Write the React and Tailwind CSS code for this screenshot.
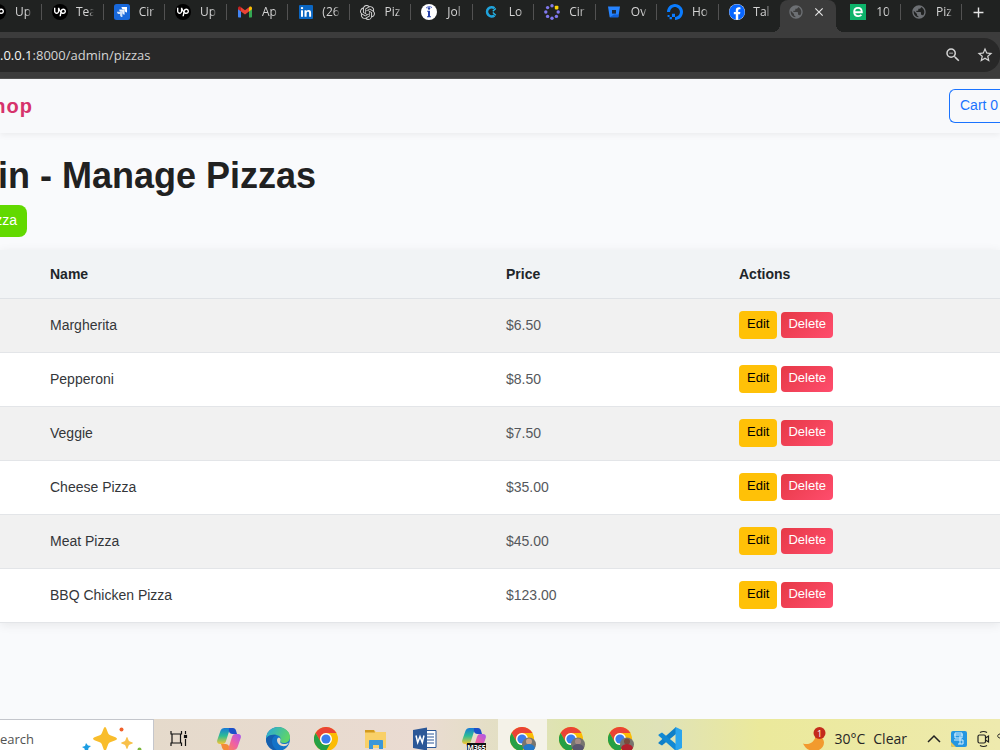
import React from 'react';
import { FaFacebook } from 'react-icons/fa';
import { MdPublic, MdZoomOut, MdStarOutline, MdClose, MdAdd } from 'react-icons/md';
import { SiUpwork, SiOpenai, SiDigitalocean } from 'react-icons/si';

const pizzas = [
  { name: 'Margherita', price: '$6.50' },
  { name: 'Pepperoni', price: '$8.50' },
  { name: 'Veggie', price: '$7.50' },
  { name: 'Cheese Pizza', price: '$35.00' },
  { name: 'Meat Pizza', price: '$45.00' },
  { name: 'BBQ Chicken Pizza', price: '$123.00' },
];

/* ---------- tab icons ---------- */

const UpworkIcon = () => (
  <span className="flex size-4 shrink-0 items-center justify-center rounded-full bg-black text-white">
    <SiUpwork size={12} />
  </span>
);

const JiraIcon = () => (
  <svg viewBox="0 0 16 16" className="size-4 shrink-0">
    <rect width="16" height="16" rx="2.5" fill="#1868db" />
    <path d="M7.500 3H13v5.500c-1.500 0-2.300-.9-2.300-2.200v-.9h-1C8.300 5.400 7.500 4.500 7.500 3z" fill="#fff" />
    <path d="M5.200 5.400h5.400v5.400c-1.500 0-2.300-.9-2.300-2.200v-.9h-.9C6 7.700 5.200 6.900 5.200 5.400z" fill="#fff" opacity=".9" />
    <path d="M3 7.700h5.400V13c-1.500 0-2.300-.8-2.300-2.100V10h-.9C3.800 10 3 9.200 3 7.700z" fill="#fff" opacity=".8" />
  </svg>
);

const GmailIcon = () => (
  <svg viewBox="0 0 16 16" className="size-4 shrink-0">
    <path d="M1 4v8.500c0 .6.4 1 1 1h2V6.500z" fill="#4285f4" />
    <path d="M15 4v8.500c0 .6-.4 1-1 1h-2V6.500z" fill="#34a853" />
    <path d="M12 3.500v4l3-2.200V4c0-1.400-1.600-2-2.500-1.200z" fill="#fbbc04" />
    <path d="M4 3.500v4L1 5.300V4c0-1.400 1.600-2 2.500-1.200z" fill="#c5221f" />
    <path d="M4 3.200l4 3 4-3v4.300l-4 3-4-3z" fill="#ea4335" />
  </svg>
);

const LinkedinIcon = () => (
  <svg viewBox="0 0 16 16" className="size-4 shrink-0">
    <rect x="1" y="1" width="14" height="14" rx="1" fill="#0a66c2" />
    <rect x="3" y="6.300" width="2" height="6.500" fill="#fff" />
    <circle cx="4" cy="4.100" r="1.200" fill="#fff" />
    <path d="M6.500 6.300h2v.9c.4-.7 1.100-1.100 2.100-1.100 1.900 0 2.500 1.200 2.500 3v3.700h-2V9.400c0-.9-.2-1.600-1.100-1.600-1 0-1.400.7-1.400 1.600v3.400h-2.100z" fill="#fff" />
  </svg>
);

const OpenaiIcon = () => <SiOpenai size={15} className="mr-px shrink-0 text-neutral-300" />;

const InfoIcon = () => (
  <svg viewBox="0 0 16 16" className="size-4 shrink-0">
    <circle cx="8" cy="8" r="8" fill="#fff" />
    <path d="M5 4.200C5.800 2.600 9.500 2 11 3.600" stroke="#4a62c8" strokeWidth="1" fill="none" />
    <circle cx="8" cy="4.500" r="1.200" fill="#2540a8" />
    <path d="M6.200 6.700H9v5.500h1V13.300H6v-1.100h1V7.800h-.8z" fill="#2540a8" />
  </svg>
);

const ClockifyIcon = () => (
  <svg viewBox="0 0 16 16" className="size-4 shrink-0">
    <path d="M11.500 4.200A4.600 4.600 0 1 0 11.500 11.500" stroke="#1fa3dc" strokeWidth="2.600" fill="none" />
    <path d="M12.800 4.600L9.800 7.300M9.800 8.500l3 2.700" stroke="#23b5e8" strokeWidth="1.400" />
  </svg>
);

const RingIcon = () => (
  <svg viewBox="0 0 16 16" className="size-4 shrink-0" fill="#8078ee">
    <circle cx="8" cy="1.800" r="1.700" />
    <rect x="10.800" y="1.800" width="3.600" height="3.600" rx=".8" fill="#fbd20a" />
    <circle cx="14.200" cy="8" r="1.700" />
    <circle cx="12.400" cy="12.400" r="1.700" />
    <circle cx="8" cy="14.200" r="1.700" />
    <circle cx="3.600" cy="12.400" r="1.700" />
    <circle cx="1.800" cy="8" r="1.700" />
    <circle cx="3.600" cy="3.600" r="1.700" />
  </svg>
);

const BucketIcon = () => (
  <svg viewBox="0 0 16 16" className="size-4 shrink-0">
    <path d="M2 2.500h12l-1.700 10.800H3.700z" fill="#2684ff" />
    <path d="M8 10.500h4.700l-.4 2.800H3.700z" fill="#0f5fd8" />
    <rect x="6" y="6" width="4" height="3.600" fill="#1d2a3c" />
  </svg>
);

const OceanIcon = () => <SiDigitalocean size={16} className="shrink-0 text-[#0a7cff]" />;

const FacebookIcon = () => (
  <span className="flex size-4 shrink-0 rounded-full bg-white">
    <FaFacebook size={16} className="text-[#0866ff]" />
  </span>
);

const GlobeIcon = () => <MdPublic size={16} className="shrink-0 text-[#6d7074]" />;

const EIcon = () => (
  <svg viewBox="0 0 16 16" className="size-4 shrink-0">
    <rect width="16" height="16" fill="#0db36b" />
    <path d="M4.200 8.200h7.600c0-2.900-1.500-4.300-3.700-4.300-2.300 0-3.900 1.700-3.900 4.100 0 2.500 1.600 4.100 4.100 4.100 1.200 0 2.300-.4 3.100-1.200" fill="none" stroke="#fff" strokeWidth="1.900" />
  </svg>
);

const tabs = [
  { icon: UpworkIcon, label: 'Tea' },
  { icon: JiraIcon, label: 'Cir' },
  { icon: UpworkIcon, label: 'Up' },
  { icon: GmailIcon, label: 'Ap' },
  { icon: LinkedinIcon, label: '(26' },
  { icon: OpenaiIcon, label: 'Piz' },
  { icon: InfoIcon, label: 'Jol' },
  { icon: ClockifyIcon, label: 'Lo' },
  { icon: RingIcon, label: 'Cir' },
  { icon: BucketIcon, label: 'Ov' },
  { icon: OceanIcon, label: 'Ho' },
  { icon: FacebookIcon, label: 'Tal' },
];

const TabLabel = ({ children }) => (
  <span className="w-[18px] shrink-0 whitespace-nowrap [mask-image:linear-gradient(to_right,black_70%,transparent)]">
    {children}
  </span>
);

const Divider = () => <span className="h-4 w-px shrink-0 bg-neutral-600" />;

const TabStrip = () => (
  <div className="flex h-8 items-start overflow-hidden bg-[#202221] text-xs text-neutral-300">
    <button className="flex h-6 w-[42px] items-center justify-between overflow-hidden">
      <span className="flex w-8 items-center justify-end gap-2">
        <UpworkIcon />
        <TabLabel>Up</TabLabel>
      </span>
      <Divider />
    </button>
    {tabs.map(({ icon: Icon, label }, i) => (
      <button key={i} className="flex h-6 min-w-0 flex-1 items-center justify-between pl-2.5">
        <span className="flex items-center gap-2">
          <Icon />
          <TabLabel>{label}</TabLabel>
        </span>
        {i < tabs.length - 1 && <Divider />}
      </button>
    ))}
    <div className="relative flex h-8 w-14 items-start rounded-t-lg bg-[#3c3c3c] pl-2">
      <span className="absolute -left-2 bottom-0 size-2 bg-[radial-gradient(circle_at_0_0,transparent_8px,#3c3c3c_8px)]" />
      <span className="absolute -right-2 bottom-0 size-2 bg-[radial-gradient(circle_at_100%_0,transparent_8px,#3c3c3c_8px)]" />
      <span className="flex h-6 items-center gap-2">
        <GlobeIcon />
        <button aria-label="Close tab" className="text-neutral-200">
          <MdClose size={14} />
        </button>
      </span>
    </div>
    <button className="flex h-6 w-[65px] items-center justify-between pl-3.5">
      <span className="flex items-center gap-2">
        <EIcon />
        <TabLabel>10</TabLabel>
      </span>
      <Divider />
    </button>
    <button className="flex h-6 w-[61px] items-center justify-between pl-2.5">
      <span className="flex items-center gap-2">
        <GlobeIcon />
        <TabLabel>Piz</TabLabel>
      </span>
      <Divider />
    </button>
    <button aria-label="New tab" className="flex h-6 w-[38px] items-center pl-2 text-neutral-200">
      <MdAdd size={17} />
    </button>
  </div>
);

const AddressBar = () => (
  <div className="border-b border-neutral-600 bg-[#3c3c3c] py-1.5">
    <div className="flex h-[34px] items-center justify-between rounded-r-2xl bg-[#282828] pr-1.5">
      <span className="pt-0.5 text-[13px] text-neutral-300">
        <span className="text-neutral-100">.0.0.1</span>:8000/admin/pizzas
      </span>
      <span className="flex items-center gap-3.5 text-neutral-300">
        <button aria-label="Zoom"><MdZoomOut size={18} /></button>
        <button aria-label="Bookmark this page"><MdStarOutline size={18} /></button>
      </span>
    </div>
  </div>
);

/* ---------- page ---------- */

const Navbar = () => (
  <nav className="relative flex h-[54px] items-center justify-between bg-[#f8f9fb] shadow-[0_2px_6px_rgba(0,0,0,0.06)]">
    <a href="#" className="flex w-[33px] justify-end text-xl font-bold tracking-wider text-[#d6336c]">
      hop
    </a>
    <button className="h-[34px] w-[51px] rounded-l-md border border-r-0 border-[#1a73ff] pb-0.5 pl-2.5 text-left text-sm whitespace-nowrap text-[#1a73ff]">
      Cart 0
    </button>
  </nav>
);

const PizzaTable = () => (
  <table className="w-full table-fixed text-left text-sm text-[#343639] shadow-[0_2px_10px_rgba(0,0,0,0.08)]">
    <colgroup>
      <col className="w-[42px]" />
      <col className="w-[456px]" />
      <col className="w-[233px]" />
      <col />
    </colgroup>
    <thead className="bg-[#f1f3f5] text-[#212529]">
      <tr className="h-12 border-b border-[#dfe2e6]">
        <th />
        <th className="px-2 font-bold">Name</th>
        <th className="px-2 font-bold">Price</th>
        <th className="px-2 font-bold">Actions</th>
      </tr>
    </thead>
    <tbody>
      {pizzas.map((pizza) => (
        <tr key={pizza.name} className="h-[54px] border-b border-[#e3e5e8] bg-white odd:bg-[#f1f1f1]">
          <td />
          <td className="px-2">{pizza.name}</td>
          <td className="px-2 text-[#55585c]">{pizza.price}</td>
          <td className="px-2">
            <div className="flex items-center gap-1 text-[13px]">
              <button className="h-7 rounded bg-[#ffc107] px-2 pb-px text-black">Edit</button>
              <button className="h-[26px] rounded bg-linear-135 from-[#e63946] to-[#ff4d6d] px-[7px] pb-px text-white">
                Delete
              </button>
            </div>
          </td>
        </tr>
      ))}
    </tbody>
  </table>
);

/* ---------- taskbar ---------- */

const SparkleArt = () => (
  <svg viewBox="0 0 62 24" className="h-6 w-[62px] shrink-0">
    <path d="M24 0c1.500 0 2.500 6 4 7.500S36 10 36 11.800s-6.500 2.800-8 4.300S25.500 24 24 24s-2.500-6.400-4-7.900S12 13.500 12 11.800s6.500-2.800 8-4.300S22.500 0 24 0z" fill="#f9bd2c" />
    <path d="M46 10c.8 0 1.200 3.200 2 4s4 1.200 4 2-3.200 1.200-4 2-1.200 4-2 4-1.200-3.200-2-4-4-1.200-4-2 3.200-1.200 4-2 1.200-4 2-4z" fill="#f8c04a" />
    <circle cx="40.500" cy="2.500" r="2" fill="#f0602a" />
    <path d="M5 16l2 2.500 3 .5-2.500 2L7 24H4l-.5-2.500L1 20l3-1z" fill="#1b9de2" />
    <circle cx="58.500" cy="22.500" r="2" fill="#7cb83c" />
  </svg>
);

const TaskViewIcon = () => (
  <svg viewBox="0 0 20 24" className="h-6 w-5" fill="none" stroke="#111" strokeWidth="1.200">
    <path d="M2 4v3h10.500V4M2 19v-3h10.500v3M3 7v9M11.500 7v9M16.500 4v3M16.500 12v7" />
    <rect x="15.500" y="8.500" width="2" height="2" fill="#111" />
  </svg>
);

const CopilotIcon = ({ id, badge }) => (
  <svg viewBox="0 0 24 24" className="size-6">
    <defs>
      <linearGradient id={`${id}-a`} x1="0" y1="0" x2="0" y2="1">
        <stop offset="0" stopColor="#1679d8" />
        <stop offset=".5" stopColor="#2dbd94" />
        <stop offset="1" stopColor="#f6c531" />
      </linearGradient>
      <linearGradient id={`${id}-b`} x1="1" y1="0" x2="0" y2="1">
        <stop offset="0" stopColor="#a458ef" />
        <stop offset=".5" stopColor="#ef5fa5" />
        <stop offset="1" stopColor="#fa8a4e" />
      </linearGradient>
    </defs>
    <path d="M7.500 1h8c-2 0-2.800 1.200-3.400 3.200l-3 9.500C8.500 15.800 7.500 17 5.500 17H3c-2.400 0-3.400-1.700-2.700-4L3.400 4C4.100 2 5.500 1 7.500 1z" fill={`url(#${id}-a)`} />
    <path d="M12 1h4c1.700 0 2.500 1 3 2.600L20 7h-4.500c-2 0-3-.8-3.600-3z" fill="#1b4fc9" />
    <path d="M16.500 23h-8c2 0 2.800-1.200 3.400-3.200l3-9.500C15.500 8.200 16.500 7 18.500 7H21c2.400 0 3.400 1.700 2.700 4l-3.100 9c-.7 2-2.100 3-4.100 3z" fill={`url(#${id}-b)`} />
    <path d="M4 17h4.500c2 0 3 .8 3.600 3l-1 3H8c-1.700 0-2.500-1-3-2.600z" fill="#f48a3a" />
    {badge && (
      <>
        <rect x="5" y="16" width="19" height="8" fill="#111" />
        <text x="14.500" y="22.500" textAnchor="middle" fontSize="7" fontWeight="700" fill="#fff">M365</text>
      </>
    )}
  </svg>
);

const EdgeIcon = () => (
  <svg viewBox="0 0 24 24" className="size-6">
    <defs>
      <linearGradient id="edge-top" x1="0" y1="0" x2="1" y2=".4">
        <stop offset="0" stopColor="#26a6df" />
        <stop offset="1" stopColor="#5ed46a" />
      </linearGradient>
    </defs>
    <circle cx="12" cy="12" r="12" fill="#1473c8" />
    <path d="M0 11.500C.5 5 5.500 0 12 0s12 4.500 12 10c0 4-3 6-6.300 6-2.700 0-4-1.100-3.500-2 1.200-1.800.6-5-3.700-6C6 7 1.500 8.500 0 11.500z" fill="url(#edge-top)" />
    <path d="M11 13c0-1.500 1-2.500 2-2.600 1.700.7 2 2.300 1.200 3.600-.6 1.100.8 3 3.700 3 2 0 3.600-.5 5-1.500-.6 1.600-1.600 2.600-2.700 3.200-4 1.500-9.200-1-9.200-5.700z" fill="#e2dacb" />
    <path d="M0 12c1.500-3.500 6-5 10.500-4-3 1-4.500 3.500-4.500 6.500 0 4 2.500 7.500 6.500 9.500C5.500 24 0 18.500 0 12z" fill="#155fae" />
  </svg>
);

const ChromeIcon = ({ face, shirt }) => (
  <svg viewBox="0 0 26 24" className="h-6 w-[26px]">
    <circle cx="12" cy="12" r="12" fill="#fbbc05" />
    <path d="M1.600 6A12 12 0 0 1 22.400 6H12a6 6 0 0 0-5.200 9z" fill="#ea4335" />
    <path d="M1.600 6A12 12 0 0 0 12 24l5.200-9A6 6 0 0 1 6.800 15z" fill="#25a046" />
    <circle cx="12" cy="12" r="6" fill="#fff" />
    <circle cx="12" cy="12" r="4.600" fill="#3b7ded" />
    {face && (
      <>
        <circle cx="19" cy="17.500" r="7" fill="#77756f" />
        <circle cx="19" cy="14.500" r="3" fill={face} />
        <path d="M13 21c1-3 3.500-4 6-4s5 1 6 4l-2 3h-8z" fill={shirt} />
      </>
    )}
  </svg>
);

const FolderIcon = () => (
  <svg viewBox="0 0 24 24" className="size-6">
    <path d="M1 3h9l2 2h10v16H1z" fill="#f9d068" />
    <path d="M1 3h9l1 2.500H1z" fill="#d39a1e" />
    <path d="M5 22v-8c0-.6.4-1 1-1h12c.6 0 1 .4 1 1v8h-4v-4H9v4z" fill="#3b97d8" />
  </svg>
);

const WordIcon = () => (
  <svg viewBox="0 0 24 24" className="size-6">
    <path d="M13 3.500h10v17H13z" fill="#fff" stroke="#2b5797" />
    <path d="M14 7h7M14 10h7M14 13h7M14 16h7" stroke="#2b5797" strokeWidth="1.200" />
    <path d="M0 3l14-2.500v23L0 21z" fill="#2b5797" />
    <path d="M3 8.500l1.700 7L7 9.500l2.300 6 1.700-7" fill="none" stroke="#fff" strokeWidth="1.500" />
  </svg>
);

const VscodeIcon = () => (
  <svg viewBox="0 0 24 24" className="size-6">
    <path d="M18 0v7L4 18.500 1 16.800c-.8-.5-.8-1.200 0-1.800z" fill="#0f7fc7" />
    <path d="M18 24v-7L4 5.500 1 7.200c-.8.500-.8 1.200 0 1.800z" fill="#1289d3" />
    <path d="M17.500 0L24 3v18l-6.500 3z" fill="#2aa5ee" />
  </svg>
);

const WeatherIcon = () => (
  <svg viewBox="0 0 24 24" className="size-6">
    <path d="M1 16.500c6 2 12-1.500 13-8.500 5 1 8 4 8 7.500 0 5-4.500 8.500-10 8.500-5 0-9-3-11-7.500z" fill="#f29a2e" />
    <circle cx="17.500" cy="6" r="6" fill="#c42b1c" />
    <text x="17.500" y="9.500" textAnchor="middle" fontSize="9" fill="#fff">1</text>
  </svg>
);

const apps = [
  { name: 'Copilot', icon: <CopilotIcon id="copilot" /> },
  { name: 'Edge', icon: <EdgeIcon /> },
  { name: 'Chrome', icon: <ChromeIcon /> },
  { name: 'File Explorer', icon: <FolderIcon /> },
  { name: 'Word', icon: <WordIcon /> },
  { name: 'Microsoft 365', icon: <CopilotIcon id="m365" badge /> },
  { name: 'Chrome, profile 1', icon: <ChromeIcon face="#c9a58c" shirt="#2478c8" />, active: true },
  { name: 'Chrome, profile 2', icon: <ChromeIcon face="#a48b86" shirt="#59566e" /> },
  { name: 'Chrome, profile 3', icon: <ChromeIcon face="#7a4b3c" shirt="#b3202c" /> },
  { name: 'VS Code', icon: <VscodeIcon /> },
];

const Taskbar = () => (
  <footer className="flex h-[31px] items-start justify-between overflow-hidden bg-[linear-gradient(to_right,#e5dacb_15%,#eadbd2_42%,#e3dfc4_50%,#dde5aa_58%,#dfe2b8_66%,#ebe99b_76%,#eeeaae)] text-neutral-800">
    <div className="flex">
      <div className="flex h-10 w-[154px] items-start justify-between border-t border-r border-[#c4c6cc] bg-white pt-[7px] pr-2.5">
        <span className="text-[13px] leading-6 text-neutral-600">earch</span>
        <SparkleArt />
      </div>
      <button aria-label="Task view" className="flex h-10 w-[50px] justify-center pt-2">
        <TaskViewIcon />
      </button>
      {apps.map((app) => (
        <button
          key={app.name}
          aria-label={app.name}
          className={`flex h-10 w-[49px] justify-center pt-2 ${app.active ? 'bg-[#f4f2e8]' : ''}`}
        >
          {app.icon}
        </button>
      ))}
    </div>
    <div className="flex items-start pt-2">
      <button className="flex items-start gap-2 pr-5 text-sm leading-6 whitespace-nowrap">
        <WeatherIcon />
        <span>30°C</span>
        <span>Clear</span>
      </button>
      <button aria-label="Show hidden icons" className="pr-2.5">
        <svg viewBox="0 0 14 24" className="h-6 w-3.5" fill="none" stroke="#222" strokeWidth="1.500">
          <path d="M1 15l6-6 6 6" />
        </svg>
      </button>
      <svg viewBox="0 0 16 24" className="mr-2.5 h-6 w-4">
        <rect y="4" width="16" height="16" rx="2" fill="#2496e0" />
        <path d="M3 8h9M4 6h7v5H4zM3 13h9v4H7M9 9v8" fill="none" stroke="#d6efff" strokeWidth="1" />
        <path d="M0 15l5 5H2c-1 0-2-1-2-2z" fill="#e7c95a" />
      </svg>
      <svg viewBox="0 0 14 24" className="mr-1.5 h-6 w-3.5" fill="none" stroke="#222" strokeWidth="1.200">
        <rect x="1" y="8" width="7.500" height="8" rx="1.500" />
        <path d="M8.500 11l3-2v6l-3-2M3 5.500q3.500-2 7 0M3 18.500q3.500 2 7 0" />
      </svg>
      <svg viewBox="0 0 3 24" className="h-6 w-[3px]" fill="none" stroke="#222">
        <path d="M3 7C0 7 0 11 3 11" />
      </svg>
    </div>
  </footer>
);

const App = () => (
  <div className="flex min-h-screen flex-col overflow-x-hidden bg-[#f9fafc] font-['Open_Sans','Noto_Sans',sans-serif]">
    <TabStrip />
    <AddressBar />
    <div className="flex-1 font-['Liberation_Sans',Arial,sans-serif]">
      <Navbar />
      <main className="pt-5">
        <h1 className="-ml-0.5 text-4xl leading-[46px] font-bold whitespace-nowrap text-[#212121]">in - Manage Pizzas</h1>
        <button className="mt-1.5 mb-[13px] flex h-8 w-[27px] items-start justify-end rounded-r-lg bg-[#62d900] pt-[5px] pr-2.5 text-sm text-white">
          zza
        </button>
        <PizzaTable />
      </main>
    </div>
    <Taskbar />
  </div>
);

export default App;
